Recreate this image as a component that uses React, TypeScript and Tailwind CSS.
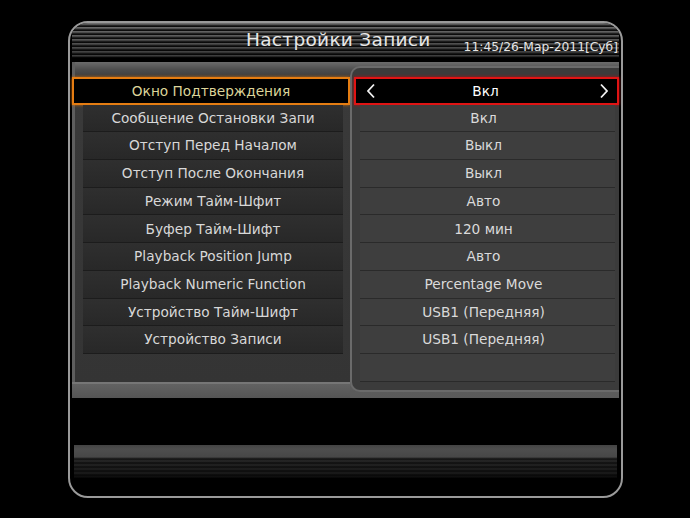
import React from "react";

const rows: [string, string][] = [
  ["Окно Подтверждения", "Вкл"],
  ["Сообщение Остановки Запи", "Вкл"],
  ["Отступ Перед Началом", "Выкл"],
  ["Отступ После Окончания", "Выкл"],
  ["Режим Тайм-Шфит", "Авто"],
  ["Буфер Тайм-Шифт", "120 мин"],
  ["Playback Position Jump", "Авто"],
  ["Playback Numeric Function", "Percentage Move"],
  ["Устройство Тайм-Шифт", "USB1 (Передняя)"],
  ["Устройство Записи", "USB1 (Передняя)"],
];

export default function App() {
  return (
    <div
      className="w-[690px] h-[518px] bg-black pt-[21px] pl-[68px] overflow-hidden"
      style={{ fontFamily: '"DejaVu Sans", "Liberation Sans", sans-serif' }}
    >
      <div className="w-[555px] h-[477px] border-2 border-[#9a9a9a] rounded-[20px] overflow-hidden flex flex-col px-[2px] bg-black">
        {/* Header */}
        <div className="h-[39px] shrink-0 flex items-start bg-[linear-gradient(180deg,rgba(0,0,0,0)_0%,rgba(0,0,0,0.45)_85%,#000_90%),repeating-linear-gradient(180deg,#6e6e6e_0px,#6e6e6e_1px,#3c3c3c_2px,#0e0e0e_3px,#0e0e0e_4px)]">
          <div className="pl-[174px] pt-[3px] text-[18.5px] text-[#e8e8e8] tracking-[0.3px]">
            Настройки Записи
          </div>
          <div className="ml-auto pr-[1px] pt-[15px] text-[12.3px] text-[#e6e6e6]">
            11:45/26-Мар-2011[Суб]
          </div>
        </div>

        {/* Content */}
        <div className="h-[336px] shrink-0 flex">
          {/* Left column */}
          <div className="w-[278px] flex flex-col">
            <div className="flex-1 border-l-[3px] border-[#5e5e5e] bg-[linear-gradient(180deg,#6c6c6c_0px,#4c4c4c_8px,#3a3a3a_16px,#343434_100%)] pt-[15px]">
              {rows.map(([label], i) =>
                i === 0 ? (
                  <div
                    key={i}
                    className="h-[27.7px] -ml-[3px] border-2 border-[#e57d12] bg-black shadow-[0_0_3px_#c46a10] flex items-center justify-center text-[13.7px] text-[#dcd49a]"
                  >
                    {label}
                  </div>
                ) : (
                  <div
                    key={i}
                    className="h-[27.7px] ml-[8px] mr-[7px] border-b border-[#1c1c1c] bg-[linear-gradient(180deg,#2f2f2f,#282828)] flex items-center justify-center text-[13.7px] text-[#d8d8d8]"
                  >
                    {label}
                  </div>
                )
              )}
            </div>
            <div className="h-[16px] border-t-2 border-[#767676] bg-[linear-gradient(180deg,#626262,#555555)]" />
          </div>

          {/* Right column */}
          <div className="flex-1 flex flex-col bg-[linear-gradient(180deg,#6c6c6c_0px,#4c4c4c_8px,#3a3a3a_16px,#343434_94%,#5e5e5e_94%,#5a5a5a_100%)] pt-[4px] pb-[6px]">
            <div className="flex-1 border-2 border-r-0 border-[#6a6a6a] rounded-l-[10px] bg-[#3b3b3b] pt-[9px]">
              {rows.map(([, value], i) =>
                i === 0 ? (
                  <div
                    key={i}
                    className="h-[27.7px] ml-[2px] border-2 border-[#e01414] bg-black shadow-[0_0_3px_#b01010] flex items-center justify-between pl-[10px] pr-[8px] text-[13.7px] text-white"
                  >
                    <svg width="10" height="16" viewBox="0 0 10 16">
                      <polyline points="8,1.5 2,8 8,14.5" fill="none" stroke="#f2f2f2" strokeWidth="1.8" />
                    </svg>
                    <span className="mr-[4px]">{value}</span>
                    <svg width="10" height="16" viewBox="0 0 10 16">
                      <polyline points="2,1.5 8,8 2,14.5" fill="none" stroke="#f2f2f2" strokeWidth="1.8" />
                    </svg>
                  </div>
                ) : (
                  <div
                    key={i}
                    className="h-[27.7px] ml-[8px] mr-[4px] pr-[8px] border-b border-[#2a2a2a] bg-[#3e3e3e] flex items-center justify-center text-[13.7px] text-[#dadada]"
                  >
                    {value}
                  </div>
                )
              )}
              <div className="h-[28px] ml-[8px] mr-[4px] border-b border-[#2a2a2a] bg-[#3e3e3e]" />
            </div>
          </div>
        </div>

        {/* Black gap */}
        <div className="h-[47px] shrink-0" />

        {/* Bottom stripes bar */}
        <div className="h-[33px] shrink-0 mx-[2px] bg-[linear-gradient(180deg,#444_0px,#4e4e4e_4px,#474747_12px,#101010_14px,#2a2a2a_16px,#0c0c0c_18px,#262626_20px,#0c0c0c_22px,#222_24px,#0a0a0a_26px,#1e1e1e_28px,#080808_30px,#111_32px,#000_33px)]" />
      </div>
    </div>
  );
}
